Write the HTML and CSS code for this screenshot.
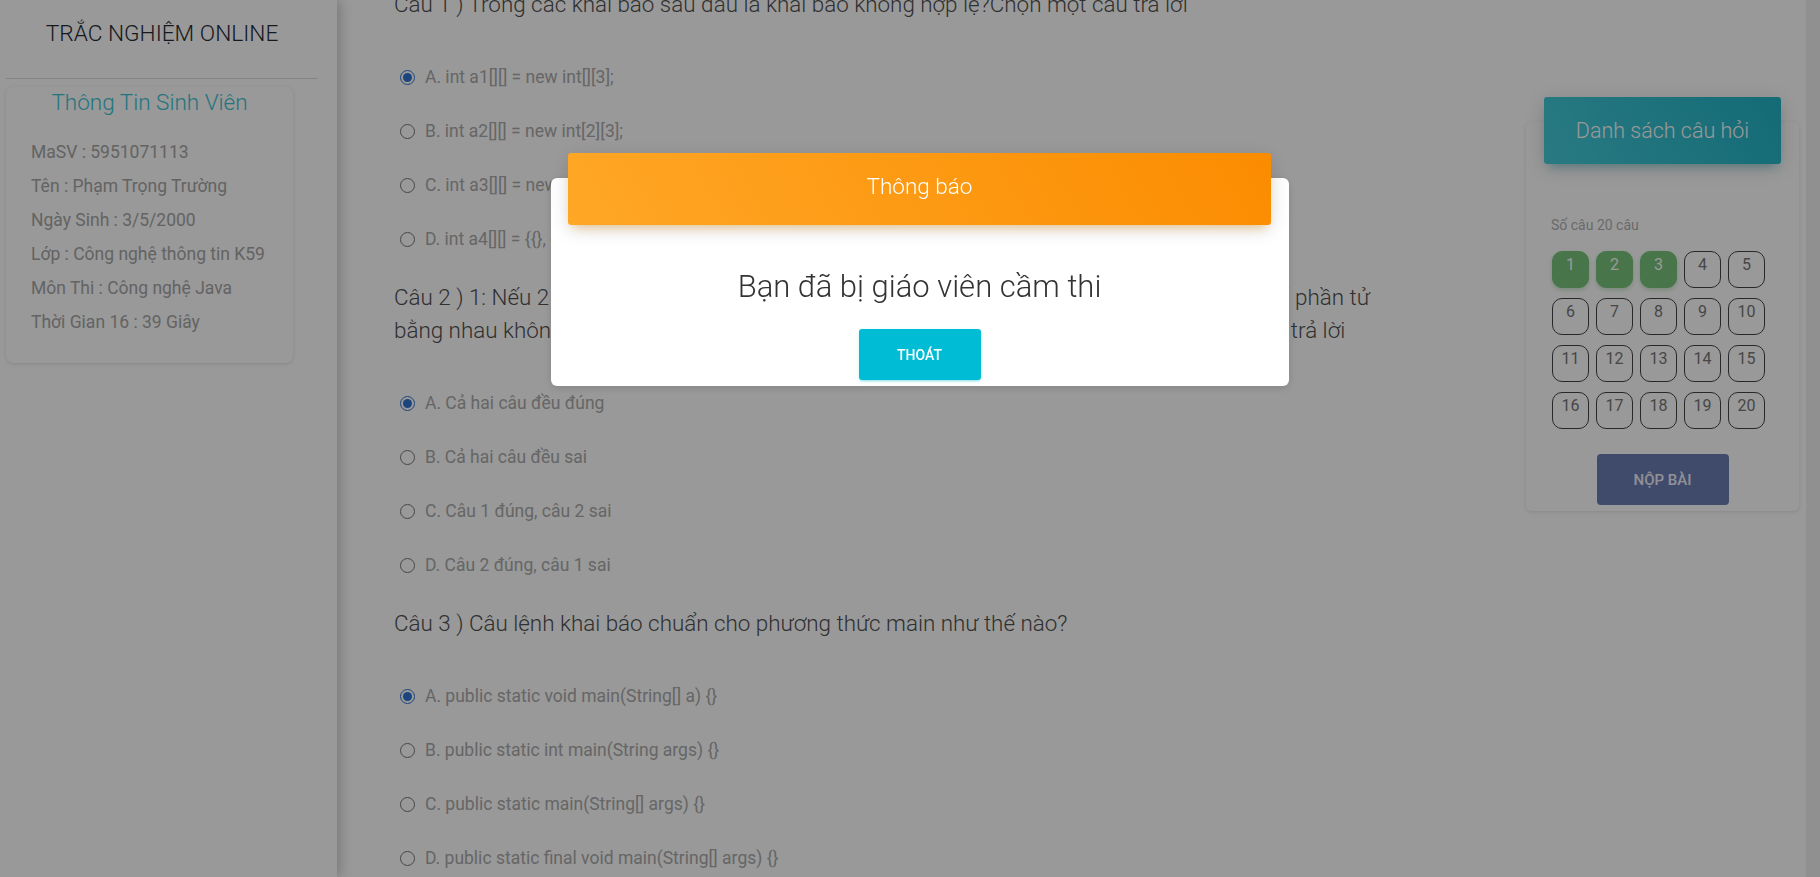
FILE: index.html
```html
<!DOCTYPE html>
<html lang="vi">
<head>
<meta charset="utf-8">
<title>Trắc nghiệm online</title>
<link rel="stylesheet" href="styles.css">
</head>
<body>
<div class="app">
  <aside class="sidebar">
    <div class="brand">
      <div class="logo">TRẮC NGHIỆM ONLINE</div>
    </div>
    <div class="info-card">
      <h3 class="info-title">Thông Tin Sinh Viên</h3>
      <p class="info-line">MaSV : 5951071113</p>
      <p class="info-line">Tên : Phạm Trọng Trường</p>
      <p class="info-line">Ngày Sinh : 3/5/2000</p>
      <p class="info-line">Lớp : Công nghệ thông tin K59</p>
      <p class="info-line">Môn Thi : Công nghệ Java</p>
      <p class="info-line">Thời Gian 16 : 39 Giây</p>
    </div>
  </aside>

  <main class="main">
    <section class="questions">
      <div class="question">
        <p class="q-text">Câu 1 ) Trong các khai báo sau đâu là khai báo không hợp lệ?Chọn một câu trả lời</p>
        <label class="opt"><input type="radio" name="q1" checked><span>A. int a1[][] = new int[][3];</span></label>
        <label class="opt"><input type="radio" name="q1"><span>B. int a2[][] = new int[2][3];</span></label>
        <label class="opt"><input type="radio" name="q1"><span>C. int a3[][] = new int[2][];</span></label>
        <label class="opt"><input type="radio" name="q1"><span>D. int a4[][] = {{}, {}, {}};</span></label>
      </div>
      <div class="question">
        <p class="q-text">Câu 2 ) 1: Nếu 2 mảng có cùng kích thước và các phần tử tương ứng bằng nhau, 2: mà có số phần tử<br>bằng nhau không thể so sánh bằng toán tử được. Câu nào đúng, câu nào sai?Chọn một câu trả lời</p>
        <label class="opt"><input type="radio" name="q2" checked><span>A. Cả hai câu đều đúng</span></label>
        <label class="opt"><input type="radio" name="q2"><span>B. Cả hai câu đều sai</span></label>
        <label class="opt"><input type="radio" name="q2"><span>C. Câu 1 đúng, câu 2 sai</span></label>
        <label class="opt"><input type="radio" name="q2"><span>D. Câu 2 đúng, câu 1 sai</span></label>
      </div>
      <div class="question">
        <p class="q-text">Câu 3 ) Câu lệnh khai báo chuẩn cho phương thức main như thế nào?</p>
        <label class="opt"><input type="radio" name="q3" checked><span>A. public static void main(String[] a) {}</span></label>
        <label class="opt"><input type="radio" name="q3"><span>B. public static int main(String args) {}</span></label>
        <label class="opt"><input type="radio" name="q3"><span>C. public static main(String[] args) {}</span></label>
        <label class="opt"><input type="radio" name="q3"><span>D. public static final void main(String[] args) {}</span></label>
      </div>
    </section>

    <aside class="panel">
      <div class="panel-card">
        <div class="panel-header">Danh sách câu hỏi</div>
        <p class="count">Số câu 20 câu</p>
        <div class="num-grid">
          <span class="num done">1</span><span class="num done">2</span><span class="num done">3</span><span class="num">4</span><span class="num">5</span>
          <span class="num">6</span><span class="num">7</span><span class="num">8</span><span class="num">9</span><span class="num">10</span>
          <span class="num">11</span><span class="num">12</span><span class="num">13</span><span class="num">14</span><span class="num">15</span>
          <span class="num">16</span><span class="num">17</span><span class="num">18</span><span class="num">19</span><span class="num">20</span>
        </div>
        <button class="submit">NỘP BÀI</button>
      </div>
    </aside>
  </main>
  <div class="scroll-track"></div>
</div>

<div class="backdrop"></div>
<div class="modal">
  <div class="modal-header">Thông báo</div>
  <p class="modal-msg">Bạn đã bị giáo viên cầm thi</p>
  <button class="btn-exit">THOÁT</button>
</div>
</body>
</html>
```

FILE: styles.css
```css
* { box-sizing: border-box; }

html, body {
  margin: 0;
  height: 100%;
  overflow: hidden;
}

body {
  font-family: Roboto, "Noto Sans", "Liberation Sans", sans-serif;
  background: #ffffff;
  color: #3c4858;
}

.app {
  display: flex;
  height: 100vh;
}

/* ---------- Sidebar ---------- */
.sidebar {
  width: 337px;
  flex: 0 0 337px;
  background: #ffffff;
  box-shadow: 3px 0 12px rgba(0, 0, 0, 0.22);
  position: relative;
  z-index: 2;
}

.brand {
  margin: 0 19px 0 6px;
  padding-top: 19px;
  height: 79px;
  border-bottom: 1px solid #dcdcdc;
}

.logo {
  text-align: center;
  font-size: 22.7px;
  line-height: 30px;
  font-weight: 300;
  color: #262c36;
}

.info-card {
  margin: 8px 0 0 6px;
  width: 287px;
  background: #ffffff;
  border-radius: 8px;
  box-shadow: 0 1px 4px rgba(0, 0, 0, 0.12);
  padding: 0 0 24px 25px;
}

.info-title {
  margin: 0 0 18px -25px;
  text-align: center;
  font-size: 22.5px;
  line-height: 30px;
  font-weight: 300;
  color: #3cc3d1;
}

.info-line {
  margin: 0;
  font-size: 17.5px;
  line-height: 34px;
  color: #a6a6a6;
}

/* ---------- Main ---------- */
.main {
  flex: 1;
  display: flex;
  min-width: 0;
}

.questions {
  flex: 1;
  min-width: 0;
  overflow: hidden;
  padding-left: 57px;
  margin-top: -27px;
}

.q-text {
  margin: 15px 0 29px;
  font-size: 22.4px;
  line-height: 33px;
  font-weight: 300;
  color: #505050;
  white-space: nowrap;
}

.opt {
  display: flex;
  align-items: center;
  height: 54px;
  padding-left: 6px;
  font-size: 17.5px;
  color: #aaaaaa;
  cursor: pointer;
}

.opt input {
  width: 15px;
  height: 15px;
  margin: 0 10px 0 0;
  accent-color: #2f74d0;
}

/* ---------- Right panel ---------- */
.panel {
  width: 280px;
  flex: 0 0 280px;
  padding-top: 122px;
}

.panel-card {
  width: 273px;
  background: #ffffff;
  border-radius: 6px;
  box-shadow: 0 1px 4px rgba(0, 0, 0, 0.12);
  padding: 0 18px 6px;
  display: flex;
  flex-direction: column;
}

.panel-header {
  margin-top: -25px;
  height: 67px;
  border-radius: 3px;
  background: linear-gradient(60deg, #45cbd9, #21b3c5);
  box-shadow: 0 4px 20px rgba(0, 0, 0, 0.14), 0 7px 10px -5px rgba(0, 172, 193, 0.4);
  color: #ffffff;
  font-size: 21.5px;
  font-weight: 300;
  display: flex;
  align-items: center;
  justify-content: center;
}

.count {
  margin: 52px 0 0 7px;
  font-size: 14px;
  line-height: 18px;
  color: #b0b0b0;
}

.num-grid {
  margin: 17px 0 0 8px;
  display: grid;
  grid-template-columns: repeat(5, 37px);
  column-gap: 7px;
  row-gap: 10px;
}

.num {
  height: 37px;
  border: 1px solid #444444;
  border-radius: 10px;
  text-align: center;
  font-size: 16px;
  line-height: 22px;
  padding-top: 2px;
  color: #777777;
}

.num.done {
  background: #78c47b;
  border-color: #78c47b;
  color: #ffffff;
  box-shadow: 0 2px 4px rgba(76, 175, 80, 0.3);
}

.submit {
  align-self: center;
  margin-top: 25px;
  width: 132px;
  height: 51px;
  border: none;
  border-radius: 4px;
  background: #6c7eb4;
  color: #f0f0f8;
  font-family: inherit;
  font-size: 15px;
  font-weight: 500;
}

.scroll-track {
  width: 14px;
  flex: 0 0 14px;
  background: #f1f1f1;
}

/* ---------- Modal ---------- */
.backdrop {
  position: fixed;
  inset: 0;
  background: rgba(0, 0, 0, 0.4);
  z-index: 10;
}

.modal {
  position: fixed;
  left: 551px;
  top: 178px;
  width: 738px;
  background: #ffffff;
  border-radius: 6px;
  box-shadow: 0 2px 8px rgba(0, 0, 0, 0.14);
  padding: 0 18px 6px 17px;
  z-index: 11;
  display: flex;
  flex-direction: column;
  align-items: center;
}

.modal-header {
  align-self: stretch;
  margin-top: -25px;
  height: 72px;
  padding-bottom: 6px;
  border-radius: 3px;
  background: linear-gradient(60deg, #ffa726, #fb8c00);
  box-shadow: 0 4px 20px rgba(0, 0, 0, 0.14), 0 7px 10px -5px rgba(255, 152, 0, 0.4);
  color: #ffffff;
  font-size: 22.5px;
  font-weight: 300;
  display: flex;
  align-items: center;
  justify-content: center;
}

.modal-msg {
  margin: 42px 0 0;
  font-size: 31px;
  line-height: 40px;
  font-weight: 300;
  color: #333333;
}

.btn-exit {
  margin-top: 22px;
  width: 122px;
  height: 51px;
  border: none;
  border-radius: 3px;
  background: #00bcd4;
  color: #ffffff;
  font-family: inherit;
  font-size: 14px;
  font-weight: 500;
  box-shadow: 0 2px 2px rgba(0, 188, 212, 0.14), 0 3px 1px -2px rgba(0, 188, 212, 0.2), 0 1px 5px rgba(0, 188, 212, 0.12);
}
```
